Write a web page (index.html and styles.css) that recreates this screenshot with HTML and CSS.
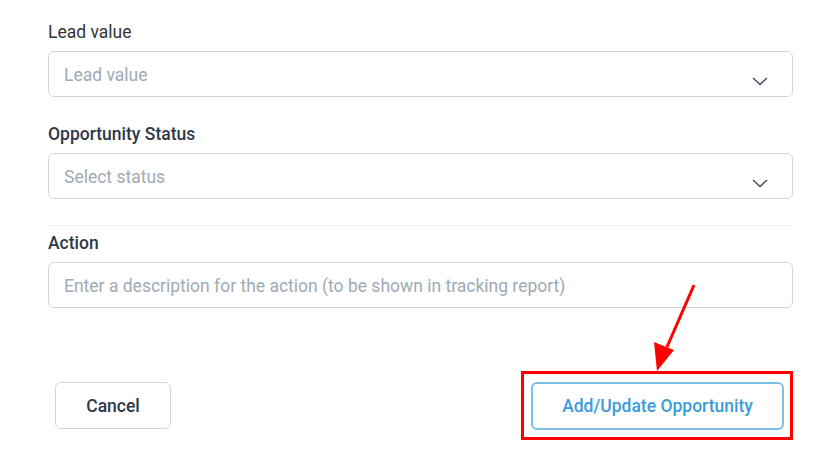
FILE: index.html
```html
<!DOCTYPE html>
<html lang="en">
<head>
    <meta charset="UTF-8">
    <meta name="viewport" content="width=device-width, initial-scale=1.0">
    <title>Opportunity</title>
    <link rel="stylesheet" href="styles.css">
</head>
<body>
    <div class="container">
        <div class="field">
            <label class="label label-light">Lead value</label>
            <div class="select">
                <span class="placeholder">Lead value</span>
                <svg class="chevron" width="16" height="9" viewBox="0 0 16 9"><polyline points="1,1 8,7.5 15,1" fill="none" stroke="#4a5568" stroke-width="1.6"/></svg>
            </div>
        </div>
        <div class="field">
            <label class="label">Opportunity Status</label>
            <div class="select">
                <span class="placeholder">Select status</span>
                <svg class="chevron" width="16" height="9" viewBox="0 0 16 9"><polyline points="1,1 8,7.5 15,1" fill="none" stroke="#4a5568" stroke-width="1.6"/></svg>
            </div>
        </div>
        <hr class="divider">
        <div class="field">
            <label class="label">Action</label>
            <input type="text" class="text-input" placeholder="Enter a description for the action (to be shown in tracking report)">
        </div>

        <div class="footer">
            <button class="btn btn-cancel">Cancel</button>
            <div class="highlight">
                <button class="btn btn-primary">Add/Update Opportunity</button>
            </div>
        </div>
    </div>

    <svg class="arrow" width="60" height="100" viewBox="0 0 60 100">
        <line x1="47" y1="4" x2="20" y2="66" stroke="#ff0000" stroke-width="3"/>
        <polygon points="10,90 7,61 27,69" fill="#ff0000"/>
    </svg>
</body>
</html>
```

FILE: styles.css
```css
body {
    font-family: Roboto, "Liberation Sans", sans-serif;
    margin: 0;
    padding: 0;
    background: white;
    position: relative;
    width: 836px;
    height: 471px;
    overflow: hidden;
}
.container {
    width: 745px;
    padding: 22px 0 0 48px;
}
.field {
    margin-bottom: 27px;
}
.label {
    display: block;
    font-size: 17.5px;
    line-height: 20px;
    font-weight: 500;
    color: #2d3748;
    margin-bottom: 9px;
}
.label-light {
    font-weight: 400;
    color: #333;
}
.select, .text-input {
    box-sizing: border-box;
    display: flex;
    align-items: center;
    justify-content: space-between;
    width: 100%;
    height: 46px;
    padding: 1px 24px 0 15px;
    border: 1px solid #d3d6df;
    border-radius: 6px;
    background: white;
}
.placeholder {
    font-size: 17.5px;
    color: #a0aab4;
}
.chevron {
    align-self: flex-end;
    margin-bottom: 10px;
}
.text-input {
    font-family: inherit;
    font-size: 17.5px;
    color: #2d3748;
    outline: none;
}
.text-input::placeholder {
    color: #a0aab4;
}
.divider {
    border: none;
    border-top: 1px solid #eef0f3;
    margin: -1px 0 7px 0;
}
.footer {
    display: flex;
    justify-content: space-between;
    align-items: center;
    margin-top: 63px;
}
.btn {
    font-family: inherit;
    font-size: 17.5px;
    font-weight: 500;
    background: white;
    border-radius: 6px;
    cursor: pointer;
}
.btn-cancel {
    margin-left: 7px;
    width: 116px;
    height: 47px;
    border: 1px solid #d3d6df;
    color: #2d3748;
}
.highlight {
    border: 3px solid #ff0000;
    padding: 8px 6px 7px 7px;
}
.btn-primary {
    display: block;
    width: 253px;
    height: 48px;
    border: 2px solid #7cc0e8;
    color: #3a9bdc;
}
.arrow {
    position: absolute;
    left: 647px;
    top: 281px;
}
```
